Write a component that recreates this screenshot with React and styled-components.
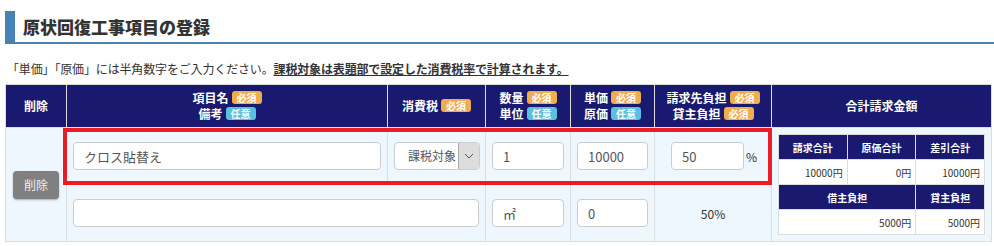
import React from 'react'
import styled, { createGlobalStyle } from 'styled-components'

const GlobalStyle = createGlobalStyle`
  body {
    margin: 0;
    background: #fff;
    font-family: "Noto Sans CJK JP", "Liberation Sans", sans-serif;
    color: #333;
  }
`

const Page = styled.div`
  padding: 11px 0 0 5px;
`

const TitleBar = styled.h2`
  margin: 0;
  height: 31px;
  border-left: 10px solid #4682b4;
  border-bottom: 2px solid #4682b4;
  padding-left: 8px;
  font-size: 17px;
  font-weight: 900;
  line-height: 31px;
  color: #333;
`

const Notice = styled.p`
  margin: 17px 0 0 2px;
  font-size: 12px;
  line-height: 16px;
  letter-spacing: -0.15px;
  color: #333;
`

const Strong = styled.span`
  font-weight: bold;
  text-decoration: underline;
`

const TableWrap = styled.div`
  position: relative;
  margin: 7px 2px 0 0;
`

const Table = styled.table`
  width: 987px;
  border-collapse: collapse;
  table-layout: fixed;
  border: 1px solid #ddd;
`

const Th = styled.th`
  background: #191970;
  color: #fff;
  font-size: 12px;
  font-weight: bold;
  line-height: 16px;
  height: 42px;
  padding: 0;
  text-align: center;
  border-left: 1px solid #ddd;
  &:first-child { border-left: none; }
`

const Badge = styled.span`
  display: inline-block;
  margin-left: 3px;
  padding: 0 5px;
  height: 13px;
  line-height: 13px;
  border-radius: 3px;
  font-size: 10px;
  font-weight: bold;
  color: #fff;
  vertical-align: 1px;
  background: ${p => (p.$opt ? '#5bc0de' : '#f0ad4e')};
`

const Td = styled.td`
  background: #eef6fe;
  height: 56px;
  padding: 0 6px;
  border: 1px solid #ddd;
  text-align: ${p => p.$align || 'left'};
  font-size: 12px;
  color: #333;
  vertical-align: middle;
`

const DeleteButton = styled.button`
  width: 46px;
  height: 28px;
  border: none;
  border-radius: 4px;
  background: #808080;
  color: #eee;
  font-family: inherit;
  font-size: 12px;
  box-shadow: 0 1px 2px rgba(0, 0, 0, 0.3);
  cursor: pointer;
`

const Input = styled.input`
  box-sizing: border-box;
  width: ${p => p.$width || '100%'};
  height: 28px;
  padding: 0 10px;
  border: 1px solid #ccc;
  border-radius: 4px;
  background: #fff;
  font-family: inherit;
  font-size: 13px;
  color: #555;
  outline: none;
`

const SelectBox = styled.div`
  box-sizing: border-box;
  display: flex;
  width: 86px;
  height: 28px;
  border: 1px solid #ccc;
  border-radius: 4px;
  background: #fff;
  overflow: hidden;
`

const SelectText = styled.span`
  flex: 1;
  padding-left: 13px;
  line-height: 26px;
  font-size: 12px;
  color: #555;
`

const SelectArrow = styled.span`
  width: 20px;
  display: flex;
  align-items: center;
  justify-content: center;
  background: #ddd;
  border-left: 1px solid #aaa;
`

const RateCell = styled.div`
  display: flex;
  align-items: center;
  padding-left: 10px;
`

const Percent = styled.span`
  margin-left: 2px;
  font-size: 12px;
`

const Highlight = styled.div`
  position: absolute;
  left: 58px;
  top: 44px;
  width: 709px;
  height: 57px;
  box-sizing: border-box;
  border: 4px solid #ec1c24;
  pointer-events: none;
`

const SumTable = styled.table`
  width: 100%;
  border-collapse: collapse;
  table-layout: fixed;
`

const SumTh = styled.th`
  background: #191970;
  color: #fff;
  font-size: 10px;
  font-weight: bold;
  height: 24px;
  padding: 0;
  text-align: center;
  border: 1px solid #ddd;
`

const SumTd = styled.td`
  background: #fff;
  font-size: 10px;
  height: 24px;
  padding: 0 4px;
  text-align: right;
  color: #333;
  border: 1px solid #ddd;
`

const Chevron = () => (
  <svg width="10" height="6" viewBox="0 0 10 6">
    <path d="M1 1l4 4 4-4" fill="none" stroke="#555" strokeWidth="1" />
  </svg>
)

const App = () => {
  return (
    <Page>
      <GlobalStyle />
      <TitleBar>原状回復工事項目の登録</TitleBar>
      <Notice>
        「単価」「原価」には半角数字をご入力ください。
        <Strong>課税対象は表題部で設定した消費税率で計算されます。</Strong>
      </Notice>
      <TableWrap>
        <Table>
          <colgroup>
            <col style={{ width: 61 }} />
            <col style={{ width: 321 }} />
            <col style={{ width: 98 }} />
            <col style={{ width: 85 }} />
            <col style={{ width: 84 }} />
            <col style={{ width: 117 }} />
            <col />
          </colgroup>
          <thead>
            <tr>
              <Th>削除</Th>
              <Th>項目名<Badge>必須</Badge><br />備考<Badge $opt>任意</Badge></Th>
              <Th>消費税<Badge>必須</Badge></Th>
              <Th>数量<Badge>必須</Badge><br />単位<Badge $opt>任意</Badge></Th>
              <Th>単価<Badge>必須</Badge><br />原価<Badge $opt>任意</Badge></Th>
              <Th>請求先負担<Badge>必須</Badge><br />貸主負担<Badge>必須</Badge></Th>
              <Th>合計請求金額</Th>
            </tr>
          </thead>
          <tbody>
            <tr>
              <Td rowSpan={2} $align="center"><DeleteButton>削除</DeleteButton></Td>
              <Td><Input defaultValue="クロス貼替え" /></Td>
              <Td>
                <SelectBox>
                  <SelectText>課税対象</SelectText>
                  <SelectArrow><Chevron /></SelectArrow>
                </SelectBox>
              </Td>
              <Td><Input defaultValue="1" /></Td>
              <Td><Input defaultValue="10000" /></Td>
              <Td>
                <RateCell>
                  <Input $width="73px" defaultValue="50" />
                  <Percent>%</Percent>
                </RateCell>
              </Td>
              <Td rowSpan={2}>
                <SumTable>
                  <tbody>
                    <tr>
                      <SumTh>請求合計</SumTh>
                      <SumTh>原価合計</SumTh>
                      <SumTh>差引合計</SumTh>
                    </tr>
                    <tr>
                      <SumTd>10000円</SumTd>
                      <SumTd>0円</SumTd>
                      <SumTd>10000円</SumTd>
                    </tr>
                    <tr>
                      <SumTh colSpan={2}>借主負担</SumTh>
                      <SumTh>貸主負担</SumTh>
                    </tr>
                    <tr>
                      <SumTd colSpan={2}>5000円</SumTd>
                      <SumTd>5000円</SumTd>
                    </tr>
                  </tbody>
                </SumTable>
              </Td>
            </tr>
            <tr>
              <Td colSpan={2}><Input defaultValue="" /></Td>
              <Td><Input defaultValue="㎡" /></Td>
              <Td><Input defaultValue="0" /></Td>
              <Td $align="center">50%</Td>
            </tr>
          </tbody>
        </Table>
        <Highlight />
      </TableWrap>
    </Page>
  )
}

export default App
